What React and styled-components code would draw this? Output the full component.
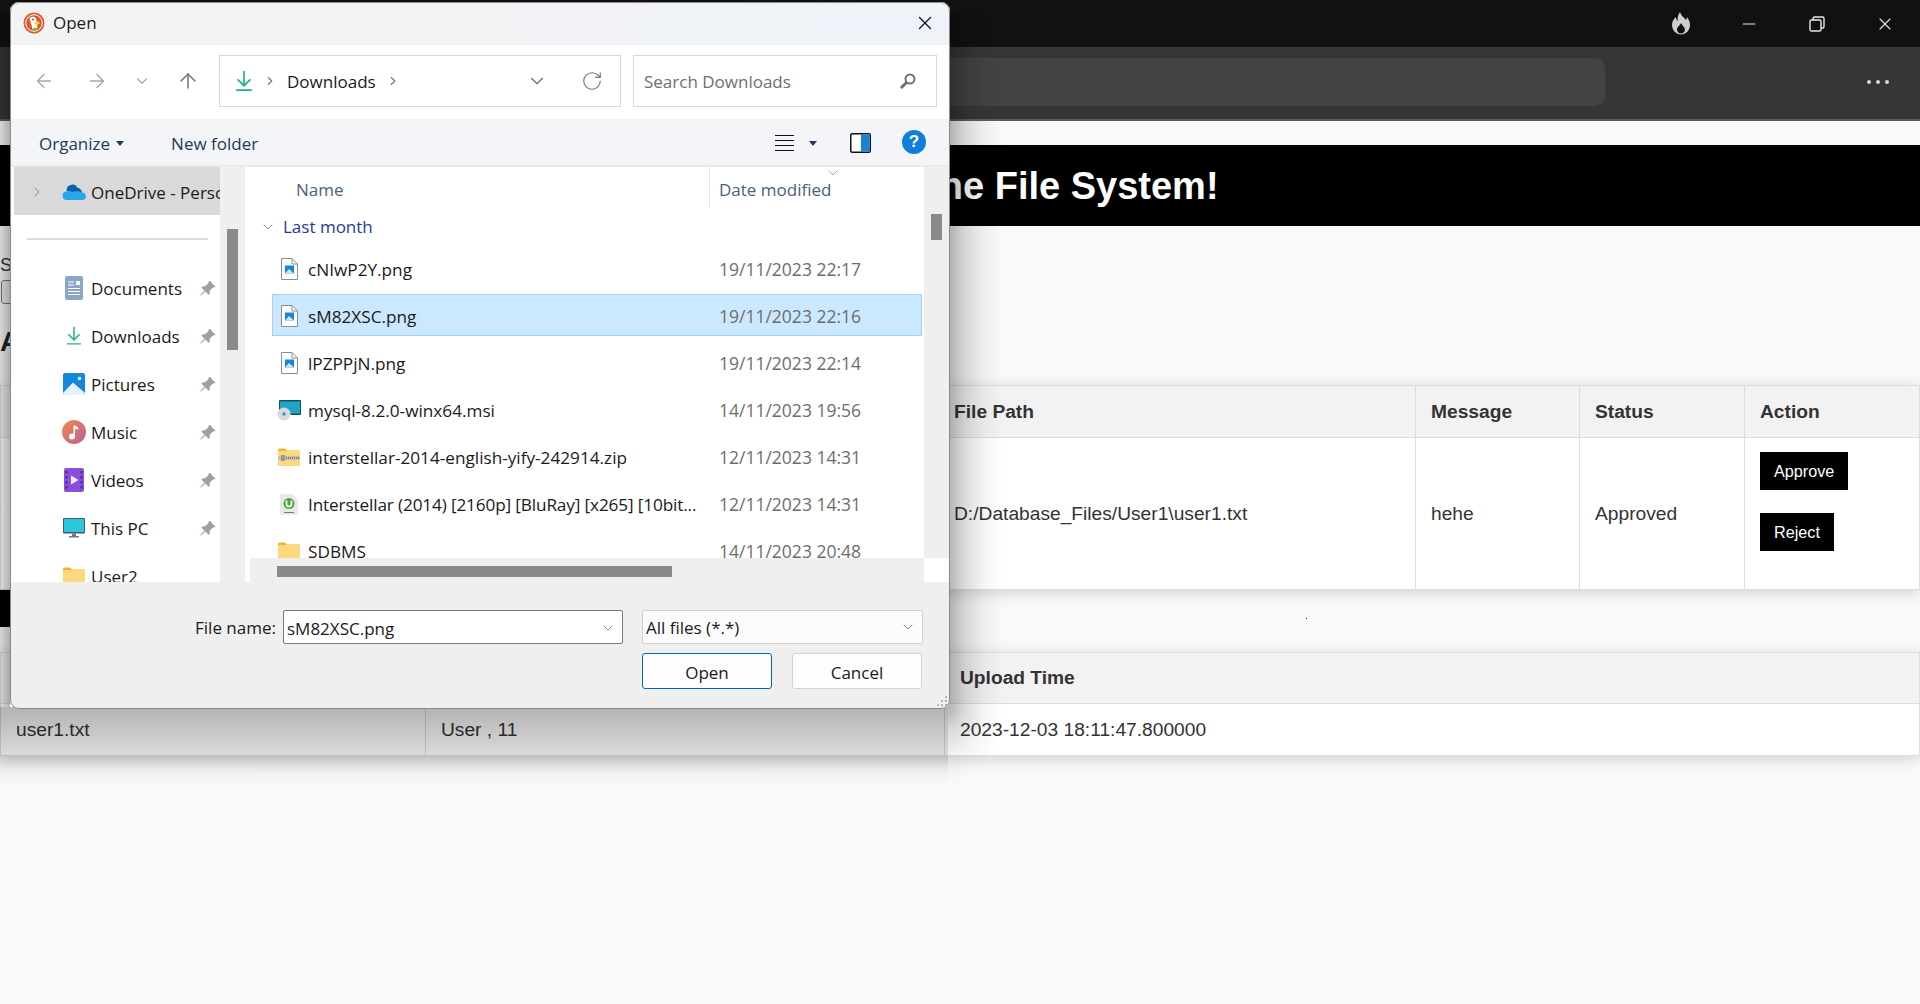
import React from "react";
import styled, { createGlobalStyle } from "styled-components";
import { ArrowLeft, ArrowRight, ArrowUp, ChevronDown, ChevronRight, RotateCw, X, Minus } from "lucide-react";
import { BsPinAngleFill } from "react-icons/bs";

const GlobalStyle = createGlobalStyle`
  * { box-sizing: border-box; }
  html, body { margin: 0; padding: 0; height: 100%; background: #f9f9f9; }
  body { font-family: "Liberation Sans", Arial, sans-serif; color: #333; overflow: hidden; }
`;

const DIALOG_FONT = `"Open Sans", "Noto Sans", sans-serif`;

/* ---- browser chrome ---- */
const Page = styled.div`
  position: relative;
  width: 1920px;
  height: 1004px;
  overflow: hidden;
  background: #f9f9f9;
`;
const TitleStrip = styled.div`
  height: 47px;
  background: #111111;
  color: #e8e8e8;
  display: flex;
  align-items: center;
  justify-content: flex-end;
  padding-right: 1px;
`;
const WinButton = styled.div`
  width: ${p => p.$w || 68}px;
  display: flex;
  justify-content: center;
`;
const FlameIcon = () => (
  <svg width="20" height="23" viewBox="0 0 20 23" fill="#cfcfcf" fillRule="evenodd">
    <path d="M9 0C10 4 13 5 15 8C16 6.500 16 6 16 5C18 8 19 10 19 13C19 18 15 22.500 10 22.500C5 22.500 1 18 1 13C1 9 3 7 5 5C5 7 5.500 8 6.500 9C6.500 5 7 3 9 0ZM10 21.500C7.500 21.500 6 19.500 6 17.500C6 15 8.500 14 10 11C11.500 14 14 15 14 17.500C14 19.500 12.500 21.500 10 21.500Z" />
  </svg>
);
const RestoreIcon = () => (
  <svg width="16" height="16" viewBox="0 0 16 16" fill="none" stroke="#e8e8e8" strokeWidth="1.4">
    <rect x="1" y="4" width="11" height="11" rx="1.5" />
    <path d="M4 4V2.5A1.5 1.5 0 0 1 5.5 1H13.5A1.5 1.5 0 0 1 15 2.5V10.5A1.5 1.5 0 0 1 13.5 12H12" />
  </svg>
);
const AddressStrip = styled.div`
  height: 74px;
  background: #363636;
  border-bottom: 2px solid #5c5c5c;
  display: flex;
  align-items: center;
  padding: 0 31px 2px 0;
  justify-content: space-between;
`;
const AddressInput = styled.div`
  margin-left: 700px;
  width: 905px;
  height: 48px;
  border-radius: 10px;
  background: #434343;
`;
const Dots = styled.div`
  display: flex;
  gap: 5px;
  span { width: 4px; height: 4px; border-radius: 50%; background: #d6d6d6; }
`;

/* ---- page behind the dialog ---- */
const Banner = styled.h1`
  margin: 24px 0 0;
  height: 81px;
  background: #000;
  color: #fff;
  font-size: 38px;
  font-weight: 700;
  line-height: 83px;
  padding-left: 704px;
  white-space: nowrap;
`;
const UploadBlock = styled.div`
  height: 159px;
  padding-top: 28px;
`;
const Label = styled.div`
  font-size: 18px;
  line-height: 22px;
`;
const FileButton = styled.div`
  margin: 4px 0 0 1px;
  width: 110px;
  height: 24px;
  padding-left: 12px;
  border: 1px solid #767676;
  border-radius: 3px;
  background: #efefef;
  font-size: 14px;
`;
const SectionTitle = styled.h2`
  margin: 22px 0 0;
  font-size: 28px;
  color: #222;
`;
const Table = styled.table`
  width: 1920px;
  border-collapse: collapse;
  table-layout: fixed;
  background: #fff;
  box-shadow: 0 3px 14px rgba(0, 0, 0, 0.16);
`;
const Th = styled.th`
  width: ${p => p.$w}px;
  height: ${p => p.$h || 51}px;
  padding: 0 15px;
  background: #f2f2f2;
  border: 1px solid #ddd;
  text-align: left;
  font-size: 19.2px;
  font-weight: 700;
  color: #333;
`;
const Td = styled.td`
  height: ${p => p.$h}px;
  padding: 0 15px;
  border: 1px solid #ddd;
  font-size: 19.2px;
  color: #333;
  white-space: nowrap;
`;
const ActionStack = styled.div`
  display: flex;
  flex-direction: column;
  align-items: flex-start;
  gap: 23px;
  padding-bottom: 24px;
`;
const ActionButton = styled.button`
  height: 38px;
  padding: 0 14px;
  border: none;
  background: #000;
  color: #fff;
  font: 16.2px "Liberation Sans", Arial, sans-serif;
`;
const Between = styled.div`
  height: 62px;
  display: flex;
`;
const BlackBar = styled.div`
  width: 700px;
  height: 37px;
  background: #000;
`;
const Speck = styled.span`
  width: 1px;
  height: 1px;
  margin: 28px 0 0 606px;
  background: #222;
`;

/* ---- file dialog ---- */
const SIDE_STOPS = `rgba(0, 0, 0, 0.3) 0%, rgba(0, 0, 0, 0.14) 30%, rgba(0, 0, 0, 0.04) 65%, rgba(0, 0, 0, 0) 100%`;
const DROP_STOPS = `rgba(0, 0, 0, 0.3) 0%, rgba(0, 0, 0, 0.15) 60%, rgba(0, 0, 0, 0.03) 85%, rgba(0, 0, 0, 0) 100%`;
const ShadowBottom = styled.div`
  position: absolute;
  z-index: 4;
  left: 0;
  top: 707px;
  width: 948px;
  height: 78px;
  background: linear-gradient(180deg, ${DROP_STOPS});
`;
const ShadowRight = styled.div`
  position: absolute;
  z-index: 4;
  left: 948px;
  top: 14px;
  width: 56px;
  height: 693px;
  background: linear-gradient(90deg, ${SIDE_STOPS});
`;
const ShadowCorner = styled.div`
  position: absolute;
  z-index: 4;
  left: 948px;
  top: 707px;
  width: 56px;
  height: 78px;
  background: radial-gradient(ellipse farthest-side at 0 0, ${SIDE_STOPS});
`;
const ShadowLeft = styled.div`
  position: absolute;
  z-index: 4;
  left: 0;
  top: 14px;
  width: 10px;
  height: 693px;
  background: linear-gradient(270deg, rgba(0, 0, 0, 0.3), rgba(0, 0, 0, 0.14));
`;
const Dialog = styled.div`
  position: absolute;
  z-index: 5;
  left: 10px;
  top: 2px;
  width: 940px;
  height: 707px;
  background: #efefef;
  border-radius: 9px;
  overflow: hidden;
  outline: 1px solid #8a8a8a;
  outline-offset: -1px;
  font-family: ${DIALOG_FONT};
  font-size: 17px;
  color: #1a1a1a;
`;
const DialogTitle = styled.div`
  height: 43px;
  background: linear-gradient(90deg, #f3f3f4 0%, #f2f3f5 50%, #eef3fa 100%);
  display: flex;
  align-items: center;
  padding: 0 14px 2px 13px;
  gap: 8px;
  span { flex: 1; }
`;
const NavRow = styled.div`
  height: 74px;
  background: #fff;
  display: flex;
  align-items: center;
  padding: 10px 13px 12px 0;
`;
const NavArrows = styled.div`
  width: 209px;
  display: flex;
  align-items: center;
  padding-left: 23px;
  color: #a6a6a6;
`;
const NavSlot = styled.div`
  display: flex;
  width: ${p => p.$w}px;
  color: ${p => p.$c || "#a6a6a6"};
`;
const FieldBox = styled.div`
  height: 52px;
  border: 1px solid #d9d9d9;
  display: flex;
  align-items: center;
  width: ${p => p.$w}px;
`;
const Crumbs = styled(FieldBox)`
  padding: 0 17px 0 15px;
  margin-right: 12px;
  color: #1a1a1a;
  gap: 10px;
  svg { flex: none; }
  b { font-weight: 400; }
  i { flex: 1; }
`;
const Search = styled(FieldBox)`
  padding: 0 19px 0 10px;
  justify-content: space-between;
  color: #6f6f6f;
`;
const CommandBar = styled.div`
  height: 48px;
  background: #f3f5f8;
  border-bottom: 2px solid #eaeaea;
  display: flex;
  align-items: center;
  padding: 2px 24px 0 29px;
  color: #1e395b;
  font-size: 17px;
`;
const Caret = styled.span`
  width: 0;
  height: 0;
  border: 4px solid transparent;
  border-top: 5px solid #1e395b;
  border-bottom: none;
  margin: 0 ${p => p.$r || 0}px 0 ${p => p.$l || 0}px;
`;
const Spring = styled.div`
  flex: 1;
`;
const ListIcon = () => (
  <svg width="22" height="22" viewBox="0 0 22 22" stroke="#111" strokeWidth="1.2">
    <path d="M1 3.5H20M1 8.5H20M1 13.5H20M1 18.5H20" />
  </svg>
);
const PaneIcon = () => (
  <svg width="22" height="20" viewBox="0 0 22 20">
    <rect x="0.75" y="0.75" width="19.5" height="18.5" rx="1.5" fill="#fff" stroke="#111" strokeWidth="1.5" />
    <rect x="11" y="1.5" width="8.5" height="17" fill="#1683d8" />
  </svg>
);
const HelpIcon = styled.div`
  width: 24px;
  height: 24px;
  margin-top: -2px;
  border-radius: 50%;
  background: #0f7fd8;
  color: #fff;
  font: 700 17px/24px "Liberation Sans", sans-serif;
  text-align: center;
`;
const Body = styled.div`
  height: 415px;
  display: flex;
  background: #fff;
`;
const NavPane = styled.div`
  width: 210px;
  height: 415px;
  overflow: hidden;
  padding-left: 4px;
`;
const NavItem = styled.div`
  height: 48px;
  display: flex;
  align-items: center;
  white-space: nowrap;
  overflow: hidden;
  padding-top: ${p => (p.$sel ? 2 : 0)}px;
  background: ${p => (p.$sel ? "#d9d9d9" : "transparent")};
`;
const Expander = styled.div`
  width: 38px;
  padding-left: 15px;
  color: #8a8a8a;
  display: flex;
`;
const NavIconSlot = styled.div`
  width: 37px;
  flex: none;
  display: flex;
  justify-content: center;
  padding-left: 6px;
`;
const NavLabel = styled.div`
  margin-left: 2px;
  width: 108px;
`;
const PinSlot = styled.div`
  color: #98a1a8;
  display: flex;
  font-size: 17px;
`;
const Divider = styled.div`
  height: 2px;
  margin: 23px 12px 24px 13px;
  background: #dcdcdc;
`;
const ScrollTrack = styled.div`
  width: ${p => p.$w}px;
  flex: none;
  background: #efefef;
  padding: ${p => p.$top}px 7px 0;
`;
const ScrollThumb = styled.div`
  height: ${p => p.$h}px;
  background: #8a8a8a;
`;
const WhiteGap = styled.div`
  width: 5px;
`;
const ListColumn = styled.div`
  flex: 1;
  display: flex;
  flex-direction: column;
`;
const ListTop = styled.div`
  height: 391px;
  display: flex;
`;
const Files = styled.div`
  width: 674px;
  height: 391px;
  overflow: hidden;
`;
const Header = styled.div`
  position: relative;
  height: 41px;
  display: flex;
  color: #4c607a;
  line-height: 45px;
`;
const NameHead = styled.div`
  width: 460px;
  padding-left: 46px;
  border-right: 1px solid #e5e5e5;
`;
const DateHead = styled.div`
  padding-left: 9px;
`;
const SortMark = styled.div`
  position: absolute;
  left: 575px;
  top: -2px;
  color: #777;
  display: flex;
`;
const Group = styled.div`
  height: 38px;
  display: flex;
  align-items: center;
  padding: 0 0 1px 10px;
  gap: 7px;
  color: #1f3a93;
  svg { color: #777; }
`;
const FileRow = styled.div`
  height: 42px;
  margin: 1px 2px 5px 22px;
  padding-top: 2px;
  display: flex;
  align-items: center;
  white-space: nowrap;
  border: 1px solid ${p => (p.$sel ? "#99d1ff" : "transparent")};
  background: ${p => (p.$sel ? "#cce8ff" : "transparent")};
`;
const FileIconSlot = styled.div`
  width: 35px;
  flex: none;
  display: flex;
  justify-content: center;
  padding-right: 3px;
`;
const FileName = styled.div`
  width: 411px;
  overflow: hidden;
  font-size: 17.2px;
  letter-spacing: ${p => (p.$tight ? "-0.14px" : "0")};
`;
const FileDate = styled.div`
  color: #6d6d6d;
  font-size: 17.5px;
`;
const HScroll = styled.div`
  width: 674px;
  height: 24px;
  background: #efefef;
  padding: 8px 0 0 27px;
`;
const HThumb = styled.div`
  width: 395px;
  height: 11px;
  background: #8a8a8a;
`;
const Footer = styled.div`
  height: 127px;
  position: relative;
  padding: 28px 28px 0 0;
  display: flex;
  flex-direction: column;
  align-items: flex-end;
  gap: 9px;
`;
const FieldRow = styled.div`
  display: flex;
  align-items: center;
  margin-right: -1px;
`;
const FieldLabel = styled.div`
  margin-right: 7px;
`;
const Combo = styled.div`
  width: ${p => p.$w}px;
  height: 34px;
  margin-left: ${p => p.$l || 0}px;
  padding: ${p => (p.$plain ? 0 : 2)}px 6px 0 3px;
  display: flex;
  align-items: center;
  justify-content: space-between;
  background: ${p => (p.$plain ? "#fbfbfb" : "#fff")};
  border: 1px solid ${p => (p.$plain ? "#d0d0d0" : "#7a7a7a")};
  border-radius: 2px;
  svg { color: #777; }
`;
const Buttons = styled.div`
  display: flex;
  gap: 20px;
`;
const DialogButton = styled.div`
  width: 130px;
  height: 36px;
  padding-top: 2px;
  display: flex;
  align-items: center;
  justify-content: center;
  background: #fdfdfd;
  border: 1px solid ${p => (p.$primary ? "#0067c0" : "#d4d4d4")};
  border-radius: 3px;
`;
const Grip = styled.div`
  position: absolute;
  right: 3px;
  bottom: 3px;
  width: 11px;
  height: 11px;
  background-image: radial-gradient(#b0b0b0 1px, transparent 1.2px);
  background-size: 4px 4px;
  clip-path: polygon(100% 0, 100% 100%, 0 100%);
`;

/* ---- icons ---- */
const DuckLogo = () => (
  <svg width="22" height="22" viewBox="0 0 22 22">
    <circle cx="11" cy="11" r="10.5" fill="#de5833" />
    <circle cx="11" cy="11" r="8.3" fill="none" stroke="#fff" strokeWidth="1" />
    <path d="M7 5.5c2-1.5 5-1 6 1 .8 1.6.6 3 1 5 .4 2 .6 3.5 0 5.5H9c.3-2.5-.5-4-1.2-6C7.200 9 6 7 7 5.500z" fill="#fff" />
    <path d="M11 10.500l5.500-1v2.500l-5 .5z" fill="#fdd20a" />
    <path d="M10 16h4.500l-.5 2H10z" fill="#65bc46" />
    <circle cx="10" cy="7.500" r="0.900" fill="#2d4f8e" />
  </svg>
);
const DownloadIcon = ({ size = 18 }) => (
  <svg width={size} height={size * 1.2} viewBox="0 0 18 22" fill="none" stroke="#1bb38f" strokeWidth="1.700">
    <path d="M9 1V16M2.500 9.500L9 16L15.500 9.500M1 20.500H17" />
  </svg>
);
const CloudIcon = () => (
  <svg width="24" height="16" viewBox="0 0 24 16">
    <path d="M5 7.500A5.500 5.500 0 0 1 15.300 3.800A5 5 0 0 1 20 9H7z" fill="#0a5fb4" />
    <path d="M4.500 16A4.300 4.300 0 0 1 4 7.500C7 6 9 7 10.500 8.500C13 6.500 20 7.500 20 8.500C22.500 8.500 24 10.500 24 12.500C24 14.500 22.500 16 20.500 16z" fill="#28a8ea" />
  </svg>
);
const DocumentsIcon = () => (
  <svg width="18" height="24" viewBox="0 0 18 24">
    <rect width="18" height="24" rx="2" fill="#8aa6c4" />
    <path d="M3 6H9M3 9H9M3 12.500H15M3 15.500H15M3 18.500H15" stroke="#fff" strokeWidth="1" />
    <rect x="11" y="5" width="4" height="4" fill="#fff" />
  </svg>
);
const PicturesIcon = () => (
  <svg width="22" height="22" viewBox="0 0 22 22">
    <rect width="22" height="22" rx="2" fill="#1587dc" />
    <circle cx="16.500" cy="5.500" r="1.700" fill="#fff" />
    <path d="M0 20L10 9.500L22 20V20.500A1.500 1.500 0 0 1 20.500 22H1.500A1.500 1.500 0 0 1 0 20.500z" fill="#e4f2fc" />
  </svg>
);
const MusicIcon = () => (
  <svg width="24" height="24" viewBox="0 0 24 24">
    <defs>
      <linearGradient id="mus" x1="0" y1="0" x2="1" y2="1">
        <stop offset="0" stopColor="#ef8a45" />
        <stop offset="1" stopColor="#bb5f9f" />
      </linearGradient>
    </defs>
    <circle cx="12" cy="12" r="12" fill="url(#mus)" />
    <circle cx="10" cy="16.500" r="3" fill="#fff" />
    <path d="M11.500 16.500V5.500C14 5.500 16.500 7 16.500 9.500L13 9V16.500z" fill="#fff" />
  </svg>
);
const VideosIcon = () => (
  <svg width="20" height="24" viewBox="0 0 20 24">
    <rect width="20" height="24" rx="2" fill="#8b4ce0" />
    <path d="M7 7.500L14.500 12L7 16.500z" fill="#f3ecff" />
    <path d="M1.500 3h2v2.500h-2zM1.500 8h2v2.500h-2zM1.500 13h2v2.500h-2zM1.500 18h2v2.500h-2zM16.500 3h2v2.500h-2zM16.500 8h2v2.500h-2zM16.500 13h2v2.500h-2zM16.500 18h2v2.500h-2z" fill="#4a2a86" />
  </svg>
);
const MonitorIcon = () => (
  <svg width="22" height="20" viewBox="0 0 22 20">
    <rect width="22" height="15.500" rx="1" fill="#4a5a68" />
    <rect x="1" y="1" width="20" height="13" fill="#29c6dc" />
    <path d="M9 15.500H13V18H9zM6 18H16V19.500H6z" fill="#6e7b86" />
  </svg>
);
const FolderIcon = () => (
  <svg width="22" height="18" viewBox="0 0 22 18">
    <path d="M0 2A1.500 1.500 0 0 1 1.500 .5H7L9 2.500H22V4H0z" fill="#f0b429" />
    <path d="M0 3H22V16.500A1.500 1.500 0 0 1 20.500 18H1.500A1.500 1.500 0 0 1 0 16.500z" fill="#fdd87e" />
  </svg>
);
const ImageFileIcon = () => (
  <svg width="17" height="22" viewBox="0 0 17 22">
    <path d="M.5.500H11L16.500 6V21.500H.5z" fill="#fff" stroke="#8a8f96" />
    <path d="M11 .500V6H16.500" fill="none" stroke="#8a8f96" />
    <rect x="4" y="7.500" width="9" height="8" fill="#1587dc" />
    <path d="M4 15.500L8 11L13 15.500z" fill="#cfe8fb" />
  </svg>
);
const InstallerIcon = () => (
  <svg width="24" height="21" viewBox="0 0 24 21">
    <rect x="2" y="0" width="22" height="15" rx="1" fill="#124f66" />
    <rect x="3" y="1.500" width="20" height="12" fill="#21a5c4" />
    <circle cx="7" cy="14" r="6.500" fill="#d8dadd" />
    <circle cx="7" cy="14" r="1.700" fill="#3f8ed0" />
  </svg>
);
const ZipIcon = () => (
  <svg width="22" height="18" viewBox="0 0 22 18">
    <path d="M0 2A1.500 1.500 0 0 1 1.500 .5H7L9 2.500H22V4H0z" fill="#f0b429" />
    <path d="M0 3H22V16.500A1.500 1.500 0 0 1 20.500 18H1.500A1.500 1.500 0 0 1 0 16.500z" fill="#fdd87e" />
    <rect x="0" y="8" width="22" height="4" fill="#c8c2a8" />
    <path d="M8 10H21" stroke="#666" strokeWidth="1.500" strokeDasharray="1 1" />
    <rect x="3" y="7" width="4" height="6" fill="#9b9b8c" />
  </svg>
);
const TorrentIcon = () => (
  <svg width="18" height="23" viewBox="0 0 18 23">
    <path d="M0 1H12L18 7V22H0z" fill="#e9e9e9" />
    <circle cx="9" cy="10.500" r="5.500" fill="#49a53b" />
    <path d="M6.500 7.500V11A2.500 2.500 0 0 0 11.500 11V7.500" fill="none" stroke="#fff" strokeWidth="1.800" />
    <path d="M4 19.500H14" stroke="#777" strokeWidth="1" />
  </svg>
);
const SearchIcon = () => (
  <svg width="18" height="18" viewBox="0 0 18 18" fill="none" stroke="#6f6f6f">
    <circle cx="11" cy="7" r="4.500" strokeWidth="2" />
    <path d="M7.500 10.500L2 16" strokeWidth="3" />
  </svg>
);

const navItems = [
  { label: "Documents", icon: <DocumentsIcon /> },
  { label: "Downloads", icon: <DownloadIcon size={16} /> },
  { label: "Pictures", icon: <PicturesIcon /> },
  { label: "Music", icon: <MusicIcon /> },
  { label: "Videos", icon: <VideosIcon /> },
  { label: "This PC", icon: <MonitorIcon /> },
  { label: "User2", icon: <FolderIcon />, noPin: true },
];

const files = [
  { name: "cNIwP2Y.png", date: "19/11/2023 22:17", icon: <ImageFileIcon /> },
  { name: "sM82XSC.png", date: "19/11/2023 22:16", icon: <ImageFileIcon />, sel: true },
  { name: "lPZPPjN.png", date: "19/11/2023 22:14", icon: <ImageFileIcon /> },
  { name: "mysql-8.2.0-winx64.msi", date: "14/11/2023 19:56", icon: <InstallerIcon /> },
  { name: "interstellar-2014-english-yify-242914.zip", date: "12/11/2023 14:31", icon: <ZipIcon /> },
  { name: "Interstellar (2014) [2160p] [BluRay] [x265] [10bit...", date: "12/11/2023 14:31", icon: <TorrentIcon />, tight: true },
  { name: "SDBMS", date: "14/11/2023 20:48", icon: <FolderIcon /> },
];

function OpenDialog() {
  return (
    <Dialog>
      <DialogTitle>
        <DuckLogo />
        <span>Open</span>
        <X size={22} strokeWidth={1.4} color="#111" />
      </DialogTitle>
      <NavRow>
        <NavArrows>
          <NavSlot $w={53}><ArrowLeft size={22} strokeWidth={1.5} /></NavSlot>
          <NavSlot $w={47}><ArrowRight size={22} strokeWidth={1.5} /></NavSlot>
          <NavSlot $w={43}><ChevronDown size={18} strokeWidth={1.5} /></NavSlot>
          <NavSlot $w={30} $c="#7a7a7a"><ArrowUp size={24} strokeWidth={1.6} /></NavSlot>
        </NavArrows>
        <Crumbs $w={402}>
          <DownloadIcon />
          <ChevronRight size={14} strokeWidth={2} color="#777" />
          <b>Downloads</b>
          <ChevronRight size={14} strokeWidth={2} color="#777" />
          <i />
          <ChevronDown size={22} strokeWidth={1.2} color="#666" />
          <RotateCw size={22} strokeWidth={1.3} color="#777" style={{ marginLeft: 23 }} />
        </Crumbs>
        <Search $w={304}>
          <span>Search Downloads</span>
          <SearchIcon />
        </Search>
      </NavRow>
      <CommandBar>
        Organize
        <Caret $l={6} $r={47} />
        New folder
        <Spring />
        <ListIcon />
        <Caret $l={13} $r={33} />
        <PaneIcon />
        <div style={{ width: 30 }} />
        <HelpIcon>?</HelpIcon>
      </CommandBar>
      <Body>
        <NavPane>
          <NavItem $sel>
            <Expander><ChevronRight size={16} strokeWidth={1.5} /></Expander>
            <NavIconSlot><CloudIcon /></NavIconSlot>
            <NavLabel>OneDrive - Personal</NavLabel>
          </NavItem>
          <Divider />
          {navItems.map(item => (
            <NavItem key={item.label}>
              <Expander />
              <NavIconSlot>{item.icon}</NavIconSlot>
              <NavLabel>{item.label}</NavLabel>
              {!item.noPin && <PinSlot><BsPinAngleFill /></PinSlot>}
            </NavItem>
          ))}
        </NavPane>
        <ScrollTrack $w={25} $top={62}><ScrollThumb $h={121} /></ScrollTrack>
        <WhiteGap />
        <ListColumn>
          <ListTop>
            <Files>
              <Header>
                <NameHead>Name</NameHead>
                <DateHead>Date modified</DateHead>
                <SortMark><ChevronDown size={16} strokeWidth={1} /></SortMark>
              </Header>
              <Group><ChevronDown size={16} strokeWidth={1.3} />Last month</Group>
              {files.map(f => (
                <FileRow key={f.name} $sel={f.sel}>
                  <FileIconSlot>{f.icon}</FileIconSlot>
                  <FileName $tight={f.tight}>{f.name}</FileName>
                  <FileDate>{f.date}</FileDate>
                </FileRow>
              ))}
            </Files>
            <ScrollTrack $w={25} $top={47}><ScrollThumb $h={26} /></ScrollTrack>
          </ListTop>
          <HScroll><HThumb /></HScroll>
        </ListColumn>
      </Body>
      <Footer>
        <FieldRow>
          <FieldLabel>File name:</FieldLabel>
          <Combo $w={340}>sM82XSC.png<ChevronDown size={16} strokeWidth={1.3} /></Combo>
          <Combo $w={281} $l={19} $plain>All files (*.*)<ChevronDown size={16} strokeWidth={1.3} /></Combo>
        </FieldRow>
        <Buttons>
          <DialogButton $primary>Open</DialogButton>
          <DialogButton>Cancel</DialogButton>
        </Buttons>
        <Grip />
      </Footer>
    </Dialog>
  );
}

export default function App() {
  return (
    <Page>
      <GlobalStyle />
      <TitleStrip>
        <WinButton $w={68}><FlameIcon /></WinButton>
        <WinButton $w={68}><Minus size={20} strokeWidth={1.3} /></WinButton>
        <WinButton $w={68}><RestoreIcon /></WinButton>
        <WinButton $w={68}><X size={20} strokeWidth={1.3} /></WinButton>
      </TitleStrip>
      <AddressStrip>
        <AddressInput />
        <Dots><span /><span /><span /></Dots>
      </AddressStrip>
      <Banner>Welcome to the File System!</Banner>
      <UploadBlock>
        <Label>Select a file</Label>
        <FileButton>Choose File</FileButton>
        <SectionTitle>All Requests</SectionTitle>
      </UploadBlock>
      <Table>
        <thead>
          <tr>
            <Th $w={938} $h={52}>File Name</Th>
            <Th $w={477} $h={52}>File Path</Th>
            <Th $w={164} $h={52}>Message</Th>
            <Th $w={165} $h={52}>Status</Th>
            <Th $h={52}>Action</Th>
          </tr>
        </thead>
        <tbody>
          <tr>
            <Td $h={152}>user1.txt</Td>
            <Td $h={152}>D:/Database_Files/User1\user1.txt</Td>
            <Td $h={152}>hehe</Td>
            <Td $h={152}>Approved</Td>
            <Td $h={152}>
              <ActionStack>
                <ActionButton>Approve</ActionButton>
                <ActionButton>Reject</ActionButton>
              </ActionStack>
            </Td>
          </tr>
        </tbody>
      </Table>
      <Between>
        <BlackBar />
        <Speck />
      </Between>
      <Table>
        <thead>
          <tr>
            <Th $w={425}>File Name</Th>
            <Th $w={519}>Owner</Th>
            <Th>Upload Time</Th>
          </tr>
        </thead>
        <tbody>
          <tr>
            <Td $h={52}>user1.txt</Td>
            <Td $h={52}>User , 11</Td>
            <Td $h={52}>2023-12-03 18:11:47.800000</Td>
          </tr>
        </tbody>
      </Table>
      <ShadowLeft />
      <ShadowRight />
      <ShadowBottom />
      <ShadowCorner />
      <OpenDialog />
    </Page>
  );
}
